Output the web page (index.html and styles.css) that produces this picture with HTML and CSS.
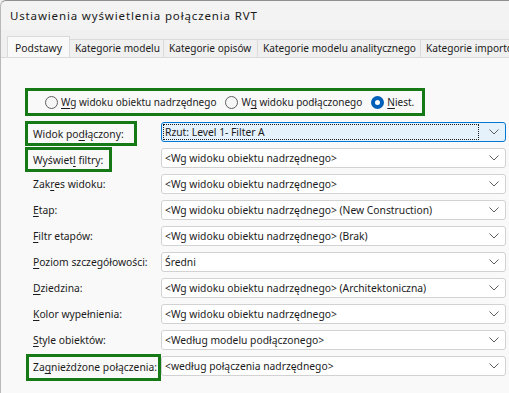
FILE: index.html
```html
<!DOCTYPE html>
<html lang="pl">
<head>
<meta charset="utf-8">
<title>Ustawienia wyświetlenia połączenia RVT</title>
<link rel="stylesheet" href="styles.css">
</head>
<body>
<div class="window">
  <div class="titlebar">Ustawienia wyświetlenia połączenia RVT</div>
  <div class="tabs">
    <div class="tab active">Podstawy</div>
    <div class="tab w94">Kategorie modelu</div>
    <div class="tab w94">Kategorie opisów</div>
    <div class="tab w163">Kategorie modelu analitycznego</div>
    <div class="tab last">Kategorie importowanych</div>
  </div>
  <div class="panel">
    <div class="radiobox">
      <label class="radio"><span class="dot"></span><span><u>W</u>g widoku obiektu nadrzędnego</span></label>
      <label class="radio"><span class="dot"></span><span>W<u>g</u> widoku podłączonego</span></label>
      <label class="radio"><span class="dot on"></span><span><u>N</u>iest.</span></label>
    </div>
    <div class="rows">
      <div class="row">
        <div class="lbl"><span class="hl hl-a"><span>Widok po<u>d</u>łączony:</span></span></div>
        <div class="select focus"><span class="focusrect">Rzut: Level 1- Filter A</span><svg class="chev" viewBox="0 0 10 6"><path d="M0.5 0.5 L5 5 L9.5 0.5"/></svg></div>
      </div>
      <div class="row">
        <div class="lbl"><span class="hl hl-b"><span>Wyświet<u>l</u> filtry:</span></span></div>
        <div class="select"><span class="val">&lt;Wg widoku obiektu nadrzędnego&gt;</span><svg class="chev" viewBox="0 0 10 6"><path d="M0.5 0.5 L5 5 L9.5 0.5"/></svg></div>
      </div>
      <div class="row">
        <div class="lbl"><span class="txt">Zak<u>r</u>es widoku:</span></div>
        <div class="select"><span class="val">&lt;Wg widoku obiektu nadrzędnego&gt;</span><svg class="chev" viewBox="0 0 10 6"><path d="M0.5 0.5 L5 5 L9.5 0.5"/></svg></div>
      </div>
      <div class="row">
        <div class="lbl"><span class="txt"><u>E</u>tap:</span></div>
        <div class="select"><span class="val">&lt;Wg widoku obiektu nadrzędnego&gt; (New Construction)</span><svg class="chev" viewBox="0 0 10 6"><path d="M0.5 0.5 L5 5 L9.5 0.5"/></svg></div>
      </div>
      <div class="row">
        <div class="lbl"><span class="txt"><u>F</u>iltr etapów:</span></div>
        <div class="select"><span class="val">&lt;Wg widoku obiektu nadrzędnego&gt; (Brak)</span><svg class="chev" viewBox="0 0 10 6"><path d="M0.5 0.5 L5 5 L9.5 0.5"/></svg></div>
      </div>
      <div class="row">
        <div class="lbl"><span class="txt"><u>P</u>oziom szczegółowości:</span></div>
        <div class="select"><span class="val">Średni</span><svg class="chev" viewBox="0 0 10 6"><path d="M0.5 0.5 L5 5 L9.5 0.5"/></svg></div>
      </div>
      <div class="row">
        <div class="lbl"><span class="txt"><u>D</u>ziedzina:</span></div>
        <div class="select"><span class="val">&lt;Wg widoku obiektu nadrzędnego&gt; (Architektoniczna)</span><svg class="chev" viewBox="0 0 10 6"><path d="M0.5 0.5 L5 5 L9.5 0.5"/></svg></div>
      </div>
      <div class="row">
        <div class="lbl"><span class="txt"><u>K</u>olor wypełnienia:</span></div>
        <div class="select"><span class="val">&lt;Wg widoku obiektu nadrzędnego&gt;</span><svg class="chev" viewBox="0 0 10 6"><path d="M0.5 0.5 L5 5 L9.5 0.5"/></svg></div>
      </div>
      <div class="row">
        <div class="lbl"><span class="txt"><u>S</u>tyle obiektów:</span></div>
        <div class="select"><span class="val">&lt;Według modelu podłączonego&gt;</span><svg class="chev" viewBox="0 0 10 6"><path d="M0.5 0.5 L5 5 L9.5 0.5"/></svg></div>
      </div>
      <div class="row">
        <div class="lbl"><span class="hl hl-c"><span>Za<u>g</u>nieżdżone połączenia:</span></span></div>
        <div class="select"><span class="val">&lt;według połączenia nadrzędnego&gt;</span><svg class="chev" viewBox="0 0 10 6"><path d="M0.5 0.5 L5 5 L9.5 0.5"/></svg></div>
      </div>
    </div>
  </div>
</div>
</body>
</html>
```
FILE: styles.css
```css
* { box-sizing: border-box; }
html, body { margin: 0; padding: 0; }
body {
  width: 509px;
  height: 393px;
  overflow: hidden;
  background: #f0f0f0;
  font-family: "Noto Sans", "Segoe UI", sans-serif;
  font-size: 10.3px;
  color: #1b1b1b;
}
u { text-decoration: underline; text-underline-offset: 1.5px; text-decoration-thickness: 1px; }
.window {
  width: 509px;
  height: 393px;
  background: #f3f3f3;
  border-top: 1px solid #8f8f8f;
  border-left: 1px solid #b8b8b8;
  border-top-left-radius: 6px;
  display: flex;
  flex-direction: column;
  overflow: hidden;
}
.titlebar {
  height: 29px;
  padding-left: 9px;
  padding-top: 7px;
  font-size: 11.5px;
  letter-spacing: 0.85px;
  color: #1a1a1a;
  line-height: 16px;
  white-space: nowrap;
}
.tabs {
  display: flex;
  align-items: flex-end;
  height: 28px;
  padding-left: 6px;
  background: #f0f0f0;
  border-bottom: 1px solid #dadada;
  font-size: 10.1px;
  overflow: hidden;
}
.tab {
  flex: none;
  height: 18px;
  line-height: 16px;
  padding-left: 5px;
  background: #f0f0f0;
  border: 1px solid #dadada;
  border-bottom: none;
  margin-left: -1px;
  white-space: nowrap;
  color: #1b1b1b;
}
.tab.w94 { width: 95px; }
.tab.w163 { width: 164px; }
.tab.last { width: 100px; }
.tab.active {
  width: 63px;
  height: 22px;
  background: #f9f9f9;
  padding: 3px 0 0 7px;
  margin-bottom: -1px;
  margin-left: 0;
  font-size: 10.4px;
  position: relative;
  z-index: 1;
}
.panel {
  flex: 1;
  background: #f9f9f9;
  padding-top: 30px;
  padding-left: 24px;
}
.radiobox {
  width: 400px;
  height: 28px;
  border: 3px solid #157a15;
  display: flex;
  align-items: center;
  padding-left: 17px;
  gap: 9px;
  font-size: 10px;
}
.radio {
  display: flex;
  align-items: center;
  gap: 3px;
  white-space: nowrap;
}
.dot {
  width: 13px;
  height: 13px;
  border-radius: 50%;
  border: 1px solid #5f5f5f;
  background: #f6f6f6;
  display: inline-block;
  flex: none;
}
.dot.on {
  border: 4px solid #005fb8;
  background: #ffffff;
}
.rows {
  margin-top: 3px;
  display: flex;
  flex-direction: column;
}
.row {
  display: flex;
  align-items: center;
  height: 26px;
}
.lbl {
  width: 136px;
  flex: none;
  display: flex;
  align-items: center;
  height: 26px;
  white-space: nowrap;
}
.lbl .txt { padding-left: 8px; }
.hl {
  border: 3px solid #157a15;
  padding-left: 5px;
  display: flex;
  align-items: center;
  height: 25px;
  margin-top: 3px;
}
.hl-a { width: 112px; }
.hl-b { width: 87px; }
.hl-c { width: 137px; height: 27px; margin-top: 2px; margin-left: 1px; padding-left: 4px; position: relative; z-index: 1; }
.select {
  width: 345px;
  height: 20px;
  background: #ffffff;
  border: 1px solid #d2d2d2;
  border-radius: 3px;
  display: flex;
  align-items: center;
  padding-left: 3px;
  padding-right: 6px;
  white-space: nowrap;
}
.select .val { flex: 1; overflow: hidden; }
.select.focus {
  background: #e5f1fb;
  border-color: #0078d4;
  padding-left: 1px;
}
.focusrect {
  flex: 1;
  height: 16px;
  border: 1px dotted #1b1b1b;
  padding-left: 1px;
  line-height: 14px;
  margin-right: 10px;
}
.chev {
  width: 10px;
  height: 6px;
  flex: none;
  fill: none;
  stroke: #5f5f5f;
  stroke-width: 1;
}
```
